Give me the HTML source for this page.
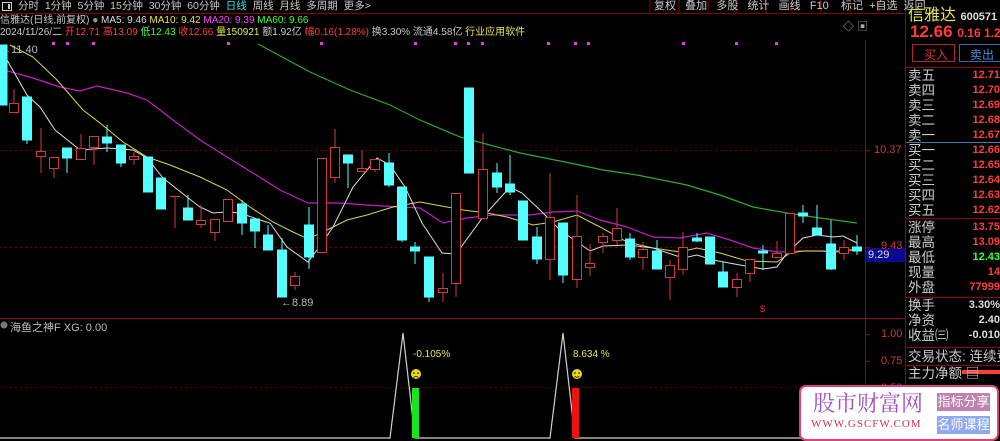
<!DOCTYPE html>
<html><head><meta charset="utf-8"><style>
*{margin:0;padding:0;box-sizing:border-box}
body{width:1000px;height:441px;background:#000;overflow:hidden;position:relative;font-family:"Liberation Sans","Noto Sans CJK SC",sans-serif;color:#c8c8c8}
.a{position:absolute;white-space:nowrap}
.tb{top:0;height:13px;font-size:10.5px;line-height:12px}
.r{color:#ff3c3c}.g{color:#3cff3c}.y{color:#e6e650}.m{color:#ff40ff}.w{color:#ddd}
.rp{left:908px;font-size:13.5px;line-height:15px;color:#ccc}
.rv{right:0;font-size:11px;line-height:15px;font-weight:bold;color:#ff3c3c;text-align:right}
</style></head><body>
<svg class="a" style="left:0;top:0" width="1000" height="441">
<line x1="0" y1="13.5" x2="906" y2="13.5" stroke="#800" />
<line x1="0" y1="318.5" x2="906" y2="318.5" stroke="#900" />
<line x1="865.5" y1="40" x2="865.5" y2="441" stroke="#900"/>
<line x1="905.5" y1="0" x2="905.5" y2="441" stroke="#900"/>
<g stroke="#800"><line x1="650" y1="0" x2="650" y2="13"/><line x1="679" y1="0" x2="679" y2="13"/><line x1="708" y1="0" x2="708" y2="13"/><line x1="737" y1="0" x2="737" y2="13"/><line x1="766" y1="0" x2="766" y2="13"/><line x1="792" y1="0" x2="792" y2="13"/><line x1="821" y1="0" x2="821" y2="13"/><line x1="850" y1="0" x2="850" y2="13"/><line x1="879" y1="0" x2="879" y2="13"/></g>
<line x1="0" y1="150.5" x2="865" y2="150.5" stroke="#700" stroke-dasharray="2,3"/>
<line x1="0" y1="247.5" x2="865" y2="247.5" stroke="#700" stroke-dasharray="2,3"/>
<line x1="0" y1="387.5" x2="865" y2="387.5" stroke="#600" stroke-dasharray="2,3"/>
<g stroke="#900"><line x1="865" y1="150.5" x2="870" y2="150.5"/><line x1="865" y1="247.5" x2="870" y2="247.5"/><line x1="865" y1="334.5" x2="870" y2="334.5"/><line x1="865" y1="361.5" x2="870" y2="361.5"/><line x1="865" y1="388.5" x2="870" y2="388.5"/></g>
<g fill="#e040e0"><rect x="52" y="42" width="3" height="3"/><rect x="66" y="42" width="3" height="3"/><rect x="92" y="42" width="3" height="3"/><rect x="227" y="42" width="3" height="3"/><rect x="320" y="42" width="3" height="3"/><rect x="414" y="42" width="3" height="3"/><rect x="454" y="42" width="3" height="3"/><rect x="467" y="42" width="3" height="3"/><rect x="481" y="42" width="3" height="3"/><rect x="547" y="42" width="3" height="3"/><rect x="574" y="42" width="3" height="3"/><rect x="587" y="42" width="3" height="3"/><rect x="682" y="42" width="3" height="3"/><rect x="735" y="42" width="3" height="3"/><rect x="775" y="42" width="3" height="3"/></g>
<polyline fill="none" stroke="#2faa2f" stroke-width="1.2" points="258,44 310,72 350,90 390,105 420,120 460,137 520,153 570,163 603,170 637,175 687,185 720,195 753,207 787,213 820,218 857,223"/>
<polyline fill="none" stroke="#c020c0" stroke-width="1.2" points="0,69 33,78 60,87 80,91 97,86 127,93 147,100 173,120 200,140 227,157 253,173 280,190 308,203 340,203 367,205 400,207 420,208 443,223 467,218 493,215 530,215 553,212 577,211 600,220 627,227 653,237 680,238 707,233 730,240 753,248 777,252 803,251 827,251 857,250"/>
<polyline fill="none" stroke="#d8d850" stroke-width="1" points="10,45 33,57 57,80 83,110 100,123 123,142 147,157 170,165 200,177 227,190 250,207 273,222 293,232 308,239 327,230 347,220 367,215 393,207 420,202 463,210 487,213 507,217 533,225 553,222 577,215 600,227 627,242 653,248 680,252 697,248 720,253 747,261 777,262 790,253 803,251 820,251 837,252 857,249"/>
<polyline fill="none" stroke="#dddddd" stroke-width="1" points="3,53 27,95 40,107 55,130 80,150 107,148 133,150 147,158 163,178 187,197 200,207 213,213 227,212 240,213 260,220 270,223 287,247 308,262 317,250 333,227 353,187 377,158 390,165 405,187 422,223 442,253 456,254 483,217 510,187 522,193 540,210 560,230 590,251 603,246 627,245 653,248 683,258 697,255 713,260 740,265 763,269 777,267 787,253 803,238 817,235 833,237 843,236 857,243"/>
<g fill="#54ffff" stroke="#54ffff">
<rect x="0" y="45" width="7" height="60"/>
<line x1="27" y1="140" x2="27" y2="144"/><rect x="22.5" y="97" width="9" height="43"/>
<rect x="62.5" y="148" width="9" height="10"/><line x1="67" y1="158" x2="67" y2="173"/>
<line x1="107" y1="125" x2="107" y2="152"/><rect x="102.5" y="137" width="9" height="6"/>
<line x1="121" y1="163" x2="121" y2="167"/><rect x="116.5" y="145" width="9" height="18"/>
<rect x="143.5" y="157" width="9" height="35"/>
<rect x="156.5" y="178" width="9" height="31"/>
<line x1="188" y1="195" x2="188" y2="208"/><rect x="183.5" y="208" width="9" height="12"/>
<line x1="242" y1="200" x2="242" y2="235"/><rect x="237.5" y="204" width="9" height="19"/>
<line x1="255" y1="219" x2="255" y2="248"/><rect x="250.5" y="219" width="9" height="12"/>
<line x1="268" y1="225" x2="268" y2="250"/><rect x="263.5" y="235" width="9" height="15"/>
<line x1="282" y1="238" x2="282" y2="297"/><rect x="277.5" y="250" width="9" height="47"/>
<line x1="309" y1="207" x2="309" y2="269"/><rect x="304.5" y="225" width="9" height="32"/>
<line x1="348" y1="155" x2="348" y2="188"/><rect x="343.5" y="155" width="9" height="8"/>
<line x1="389" y1="153" x2="389" y2="187"/><rect x="384.5" y="163" width="9" height="22"/>
<line x1="402" y1="187" x2="402" y2="242"/><rect x="397.5" y="187" width="9" height="53"/>
<line x1="415" y1="242" x2="415" y2="264"/><rect x="410.5" y="247" width="9" height="4"/>
<line x1="429" y1="257" x2="429" y2="302"/><rect x="424.5" y="257" width="9" height="40"/>
<rect x="464.5" y="88" width="9" height="85"/>
<line x1="497" y1="163" x2="497" y2="193"/><rect x="492.5" y="173" width="9" height="14"/>
<line x1="510" y1="155" x2="510" y2="195"/><rect x="505.5" y="184" width="9" height="8"/>
<rect x="518.5" y="201" width="9" height="39"/>
<line x1="537" y1="227" x2="537" y2="264"/><rect x="532.5" y="237" width="9" height="22"/>
<line x1="563" y1="223" x2="563" y2="283"/><rect x="558.5" y="223" width="9" height="52"/>
<line x1="630" y1="233" x2="630" y2="260"/><rect x="625.5" y="239" width="9" height="18"/>
<line x1="657" y1="240" x2="657" y2="269"/><rect x="652.5" y="251" width="9" height="18"/>
<line x1="697" y1="233" x2="697" y2="242"/><rect x="692.5" y="238" width="9" height="3"/>
<rect x="705.5" y="237" width="9" height="27"/>
<line x1="723" y1="262" x2="723" y2="287"/><rect x="718.5" y="272" width="9" height="15"/>
<line x1="763" y1="245" x2="763" y2="270"/><rect x="758.5" y="251" width="9" height="2"/>
<line x1="803" y1="205" x2="803" y2="223"/><rect x="798.5" y="213" width="9" height="3"/>
<line x1="817" y1="205" x2="817" y2="235"/><rect x="812.5" y="228" width="9" height="7"/>
<line x1="831" y1="220" x2="831" y2="270"/><rect x="826.5" y="244" width="9" height="25"/>
<line x1="857" y1="235" x2="857" y2="255"/><rect x="852.5" y="247" width="9" height="4"/>
</g>
<g fill="none" stroke="#d23c3c">
<line x1="14" y1="89" x2="14" y2="103"/><rect x="9.5" y="103.5" width="9" height="9"/>
<line x1="41" y1="128" x2="41" y2="173"/><rect x="36.5" y="151.5" width="9" height="5" fill="#000"/>
<line x1="54" y1="157" x2="54" y2="178"/><rect x="49.5" y="157.5" width="9" height="11" fill="#000"/>
<line x1="81" y1="134" x2="81" y2="159"/><rect x="76.5" y="148.5" width="9" height="11" fill="#000"/>
<line x1="94" y1="136" x2="94" y2="165"/><rect x="89.5" y="136.5" width="9" height="11" fill="#000"/>
<line x1="134" y1="152" x2="134" y2="165"/><rect x="129.5" y="156.5" width="9" height="3" fill="#000"/>
<line x1="175" y1="196" x2="175" y2="228"/><line x1="170" y1="196.5" x2="180" y2="196.5"/>
<line x1="201" y1="205" x2="201" y2="228"/><rect x="196.5" y="220.5" width="9" height="4" fill="#000"/>
<line x1="215" y1="219" x2="215" y2="241"/><rect x="210.5" y="219.5" width="9" height="13" fill="#000"/>
<rect x="223.5" y="199.5" width="9" height="22" fill="#000"/>
<line x1="295" y1="272" x2="295" y2="290"/><rect x="290.5" y="276.5" width="9" height="9" fill="#000"/>
<rect x="317.5" y="158.5" width="9" height="94" fill="#000"/>
<line x1="335" y1="129" x2="335" y2="183"/><rect x="330.5" y="147.5" width="9" height="30" fill="#000"/>
<line x1="362" y1="150" x2="362" y2="171"/><rect x="357.5" y="168.5" width="9" height="3" fill="#000"/>
<line x1="375" y1="159" x2="375" y2="172"/><rect x="370.5" y="159.5" width="9" height="10" fill="#000"/>
<line x1="443" y1="273" x2="443" y2="302"/><rect x="438.5" y="288.5" width="9" height="4" fill="#000"/>
<line x1="456" y1="283" x2="456" y2="297"/><rect x="451.5" y="193.5" width="9" height="90" fill="#000"/>
<line x1="483" y1="133" x2="483" y2="169"/><rect x="478.5" y="169.5" width="9" height="49" fill="#000"/>
<line x1="550" y1="173" x2="550" y2="280"/><rect x="545.5" y="217.5" width="9" height="42" fill="#000"/>
<line x1="577" y1="195" x2="577" y2="288"/><rect x="572.5" y="236.5" width="9" height="43" fill="#000"/>
<line x1="590" y1="244" x2="590" y2="276"/><rect x="585.5" y="263.5" width="9" height="4" fill="#000"/>
<line x1="603" y1="233" x2="603" y2="253"/><rect x="598.5" y="236.5" width="9" height="6" fill="#000"/>
<line x1="617" y1="208" x2="617" y2="245"/><rect x="612.5" y="228.5" width="9" height="12" fill="#000"/>
<line x1="643" y1="242" x2="643" y2="270"/><rect x="638.5" y="249.5" width="9" height="8" fill="#000"/>
<line x1="670" y1="260" x2="670" y2="300"/><rect x="665.5" y="265.5" width="9" height="12" fill="#000"/>
<line x1="683" y1="232" x2="683" y2="275"/><rect x="678.5" y="247.5" width="9" height="22" fill="#000"/>
<line x1="737" y1="273" x2="737" y2="297"/><rect x="732.5" y="279.5" width="9" height="8" fill="#000"/>
<line x1="750" y1="259" x2="750" y2="282"/><rect x="745.5" y="259.5" width="9" height="14" fill="#000"/>
<line x1="777" y1="241" x2="777" y2="257"/><rect x="772.5" y="253.5" width="9" height="4" fill="#000"/>
<rect x="785.5" y="213.5" width="9" height="40" fill="#000"/>
<line x1="844" y1="240" x2="844" y2="260"/><rect x="839.5" y="247.5" width="9" height="6" fill="#000"/>
</g>
<polyline fill="none" stroke="#cfcfcf" stroke-width="1.2" points="0,438 390,438 403,333 415,438 550,438 563,333 575,438 865,438"/>
<rect x="412" y="388" width="7" height="50" fill="#19e619"/>
<rect x="572" y="388" width="7" height="50" fill="#f01010"/>
<circle cx="416" cy="374" r="5" fill="#e8d820"/><circle cx="414" cy="373" r=".8" fill="#000"/><circle cx="418" cy="373" r=".8" fill="#000"/><path d="M413.5 377.5 Q416 375.5 418.5 377.5" stroke="#000" fill="none" stroke-width=".8"/>
<circle cx="577" cy="374" r="5" fill="#e8d820"/><circle cx="575" cy="373" r=".8" fill="#000"/><circle cx="579" cy="373" r=".8" fill="#000"/><path d="M574.5 376 Q577 378.5 579.5 376" stroke="#000" fill="none" stroke-width=".8"/>
<circle cx="4" cy="325" r="3.5" fill="#777"/>
<rect x="866" y="248" width="39" height="14" fill="#0a0a90"/>
<g stroke="#900"><line x1="906" y1="67.5" x2="1000" y2="67.5"/><line x1="906" y1="218.5" x2="1000" y2="218.5"/><line x1="906" y1="297.5" x2="1000" y2="297.5"/><line x1="906" y1="347.5" x2="1000" y2="347.5"/><line x1="906" y1="365.5" x2="1000" y2="365.5"/></g>
<line x1="906" y1="142.5" x2="1000" y2="142.5" stroke="#4a78b0"/>
<rect x="912.5" y="44.5" width="42" height="17" fill="none" stroke="#b02828"/>
<rect x="959.5" y="44.5" width="45" height="17" fill="none" stroke="#3c64b4"/>
<rect x="962" y="370" width="38" height="4" fill="#ff3c3c"/>
<rect x="2.5" y="2.5" width="9" height="8" fill="none" stroke="#ccc"/><rect x="8" y="4" width="2" height="5" fill="#ccc"/>
</svg>
<div class="a tb" style="left:18px;color:#c8c8c8">分时&nbsp; 1分钟&nbsp; 5分钟&nbsp; 15分钟&nbsp; 30分钟&nbsp; 60分钟&nbsp; <span style="color:#40e0e0">日线</span>&nbsp; 周线&nbsp; 月线&nbsp; 多周期&nbsp; 更多&gt;</div>
<div class="a tb" style="left:654px;color:#c8c8c8;font-size:11px">复权&nbsp;&nbsp; 叠加&nbsp;&nbsp; 多股&nbsp;&nbsp; 统计&nbsp;&nbsp; 画线&nbsp;&nbsp; F10&nbsp;&nbsp;&nbsp; 标记&nbsp; +自选&nbsp; 返回</div>
<div class="a" style="left:0;top:15px;font-size:10px;line-height:12px">信雅达(日线,前复权) <span style="color:#999">●</span> <span class="w">MA5: 9.46</span> <span class="y">MA10: 9.42</span> <span class="m">MA20: 9.39</span> <span class="g">MA60: 9.66</span></div>
<div class="a" style="left:0;top:27px;font-size:10px;line-height:12px">2024/11/26/二 <span class="r">开12.71</span> <span class="r">高13.09</span> <span class="g">低12.43</span> <span class="r">收12.66</span> <span class="y">量150921</span> 额1.92亿 <span class="r">幅0.16(1.28%)</span> 换3.30% 流通4.58亿 <span class="y">行业应用软件</span></div>
<div class="a" style="left:843px;top:18px;font-size:11px;color:#aaa">◇ ▣</div>
<div class="a" style="left:0;top:44px;font-size:11px;color:#bbb">←11.40</div>
<div class="a" style="left:281px;top:297px;font-size:11px;color:#bbb">←8.89</div>
<div class="a" style="left:760px;top:304px;font-size:9px;color:#e03030">$</div>
<div class="a" style="left:874px;top:144px;font-size:11px;color:#c83c3c">10.37</div>
<div class="a" style="left:881px;top:240px;font-size:11px;color:#c83c3c">9.43</div>
<div class="a" style="left:868px;top:249px;font-size:11px;color:#ddd">9.29</div>
<div class="a" style="left:881px;top:328px;font-size:11px;color:#c83c3c">1.00</div>
<div class="a" style="left:881px;top:355px;font-size:11px;color:#c83c3c">0.75</div>
<div class="a" style="left:881px;top:382px;font-size:11px;color:#c83c3c">0.50</div>
<div class="a" style="left:10px;top:319px;font-size:11px;color:#bbb">海鱼之神F XG: 0.00</div>
<div class="a" style="left:413px;top:349px;font-size:10px;color:#e6e650">-0.105%</div>
<div class="a" style="left:573px;top:349px;font-size:10px;color:#e6e650">8.634 %</div>
<div class="a" style="left:908px;top:1px;font-size:16px;color:#e6e650">信雅达 <span style="font-size:11px;color:#ddd;font-weight:bold">600571</span> <span style="font-size:9px;color:#ff3c3c">R</span></div>
<div class="a" style="left:910px;top:22px;font-size:17px;font-weight:bold;color:#ff3c3c">12.66 <span style="font-size:12px">0.16 1.28</span></div>
<div class="a" style="left:924px;top:46px;font-size:12px;color:#e03030">买入</div>
<div class="a" style="left:970px;top:46px;font-size:12px;color:#4a8ce0">卖出</div>
<div class="a rp" style="top:68px">卖五<br>卖四<br>卖三<br>卖二<br>卖一</div>
<div class="a rv" style="top:68px">12.71<br>12.70<br>12.69<br>12.68<br>12.67</div>
<div class="a rp" style="top:143px">买一<br>买二<br>买三<br>买四<br>买五</div>
<div class="a rv" style="top:143px">12.66<br>12.65<br>12.64<br>12.63<br>12.62</div>
<div class="a rp" style="top:220px">涨停<br>最高<br>最低<br>现量<br>外盘</div>
<div class="a rv" style="top:220px">13.75<br>13.09<br><span class="g">12.43</span><br>14<br>77999</div>
<div class="a rp" style="top:298px">换手<br>净资<br>收益㈢</div>
<div class="a rv" style="top:298px;color:#ddd">3.30%<br>2.40<br>-0.010</div>
<div class="a rp" style="top:349px">交易状态: 连续竞</div>
<div class="a rp" style="top:366px">主力净额 ▤</div>
<div class="a" style="left:799px;top:385px;width:200px;height:56px;background:#fff;border:2px solid #e0407a;border-radius:7px">
<div class="a" style="left:12px;top:3px;font-size:22px;line-height:26px;color:#a050c0;font-family:'Noto Serif CJK SC',serif">股市财富网</div>
<div class="a" style="left:10px;top:31px;font-size:11px;color:#d03050;font-family:'Liberation Serif',serif;letter-spacing:1px">WWW.GSCFW.COM</div>
<div class="a" style="left:136px;top:6px;width:53px;height:18px;background:#c080b0;color:#fff;font-size:13px;line-height:18px;text-align:center">指标分享</div>
<div class="a" style="left:136px;top:29px;width:53px;height:18px;background:#90a8f0;color:#fff;font-size:13px;line-height:18px;text-align:center">名师课程</div>
</div>
</body></html>
